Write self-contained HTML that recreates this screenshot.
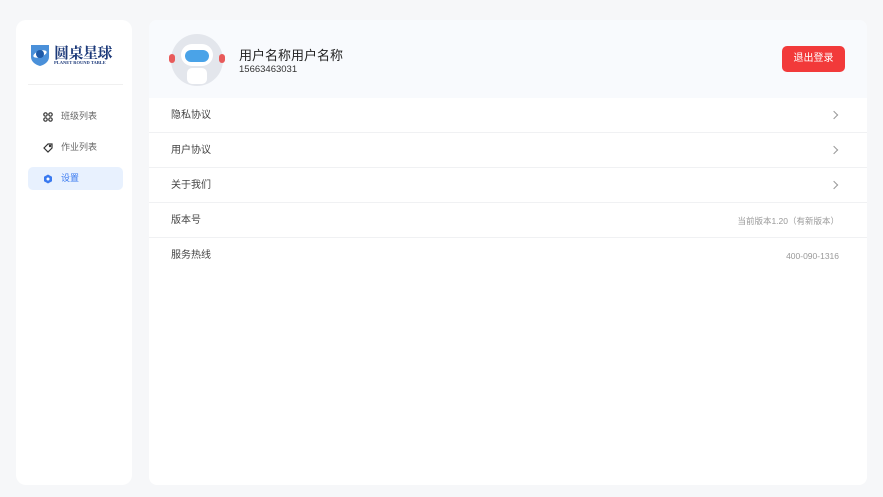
<!DOCTYPE html>
<html><head><meta charset="utf-8"><style>
*{margin:0;padding:0;box-sizing:border-box}
body{width:883px;height:497px;background:#f6f7f9;font-family:"Liberation Sans","Noto Sans CJK SC",sans-serif;position:relative;overflow:hidden}
.side{position:absolute;left:16px;top:20px;width:116px;height:465px;background:#fff;border-radius:10px}
.main{position:absolute;left:149px;top:20px;width:718px;height:465px;background:#fff;border-radius:8px;overflow:hidden}
.head{height:78px;background:#f8fafd;position:relative}
.row{height:35px;border-bottom:1px solid #f0f1f3;position:relative;font-size:10px;color:#444;line-height:36px;padding-left:22px}
.row .r{position:absolute;right:28px;top:0;font-size:8.5px;color:#999}
.row .ch{position:absolute;right:30px;top:14px;width:6px;height:6px;border-right:1px solid #999;border-top:1px solid #999;transform:rotate(45deg)}
.nav{position:absolute;left:12px;width:95px;height:23px;font-size:9px;color:#666;line-height:23px;padding-left:33px;border-radius:5px}
</style></head><body>
<div class="side">
 <svg style="position:absolute;left:14px;top:23px" width="20" height="24" viewBox="0 0 20 24"><path d="M1 2h18v12c0 5-5 8-9 9-4-1-9-4-9-9z" fill="#4a90d9"/><ellipse cx="10" cy="11" rx="7" ry="3" fill="#fff" transform="rotate(-20 10 11)"/><circle cx="10" cy="11" r="4" fill="#1e5aa8"/></svg>
 <div style="position:absolute;left:38px;top:22px;font-size:15px;font-weight:bold;color:#1d3a7a;font-family:'Noto Serif CJK SC',serif;letter-spacing:-0.5px">圆桌星球</div>
 <div style="position:absolute;left:38px;top:40px;font-size:4.5px;color:#1d3a7a;font-weight:bold;font-family:'Liberation Serif',serif">PLANET ROUND TABLE</div>
 <div style="position:absolute;left:12px;top:64px;width:95px;height:1px;background:#f0f0f0"></div>
 <div class="nav" style="top:85px"><svg style="position:absolute;left:15px;top:7px" width="10" height="10" viewBox="0 0 10 10" fill="none" stroke="#333" stroke-width="1.2"><circle cx="2.5" cy="2.5" r="1.7"/><circle cx="7.5" cy="2.5" r="1.7"/><circle cx="2.5" cy="7.5" r="1.7"/><circle cx="7.5" cy="7.5" r="1.7"/></svg>班级列表</div>
 <div class="nav" style="top:116px"><svg style="position:absolute;left:15px;top:7px" width="10" height="10" viewBox="0 0 10 10" fill="none" stroke="#333" stroke-width="1.2"><path d="M5 1h4v4L5 9 1 5z"/><circle cx="7" cy="3" r=".6"/></svg>作业列表</div>
 <div class="nav" style="top:147px;background:#e8f1fe;color:#3a7af0"><svg style="position:absolute;left:15px;top:7px" width="10" height="10" viewBox="0 0 10 10"><path d="M5 .5l4 2.25v4.5L5 9.5 1 7.25v-4.5z" fill="#3a7af0"/><circle cx="5" cy="5" r="1.5" fill="#fff"/></svg>设置</div>
</div>
<div class="main">
 <div class="head">
  <div style="position:absolute;left:22px;top:14px;width:52px;height:52px;border-radius:50%;background:#e3e6ec"></div>
  <div style="position:absolute;left:32px;top:24px;width:32px;height:22px;border-radius:11px;background:#fff"></div>
  <div style="position:absolute;left:36px;top:30px;width:24px;height:12px;border-radius:6px;background:#4aa3e8"></div>
  <div style="position:absolute;left:20px;top:34px;width:6px;height:9px;border-radius:3px;background:#e85a5a"></div>
  <div style="position:absolute;left:70px;top:34px;width:6px;height:9px;border-radius:3px;background:#e85a5a"></div>
  <div style="position:absolute;left:38px;top:48px;width:20px;height:16px;border-radius:5px;background:#fff"></div>
  <div style="position:absolute;left:90px;top:25px;font-size:13px;color:#222">用户名称用户名称</div>
  <div style="position:absolute;left:90px;top:44px;font-size:9.5px;color:#333">15663463031</div>
  <div style="position:absolute;left:633px;top:26px;width:63px;height:26px;border-radius:5px;background:#f23a3a;color:#fff;font-size:10px;text-align:center;line-height:26px">退出登录</div>
 </div>
 <div class="row">隐私协议<span class="ch"></span></div>
 <div class="row">用户协议<span class="ch"></span></div>
 <div class="row">关于我们<span class="ch"></span></div>
 <div class="row">版本号<span class="r">当前版本1.20（有新版本）</span></div>
 <div class="row" style="border:none">服务热线<span class="r">400-090-1316</span></div>
</div>
</body></html>
